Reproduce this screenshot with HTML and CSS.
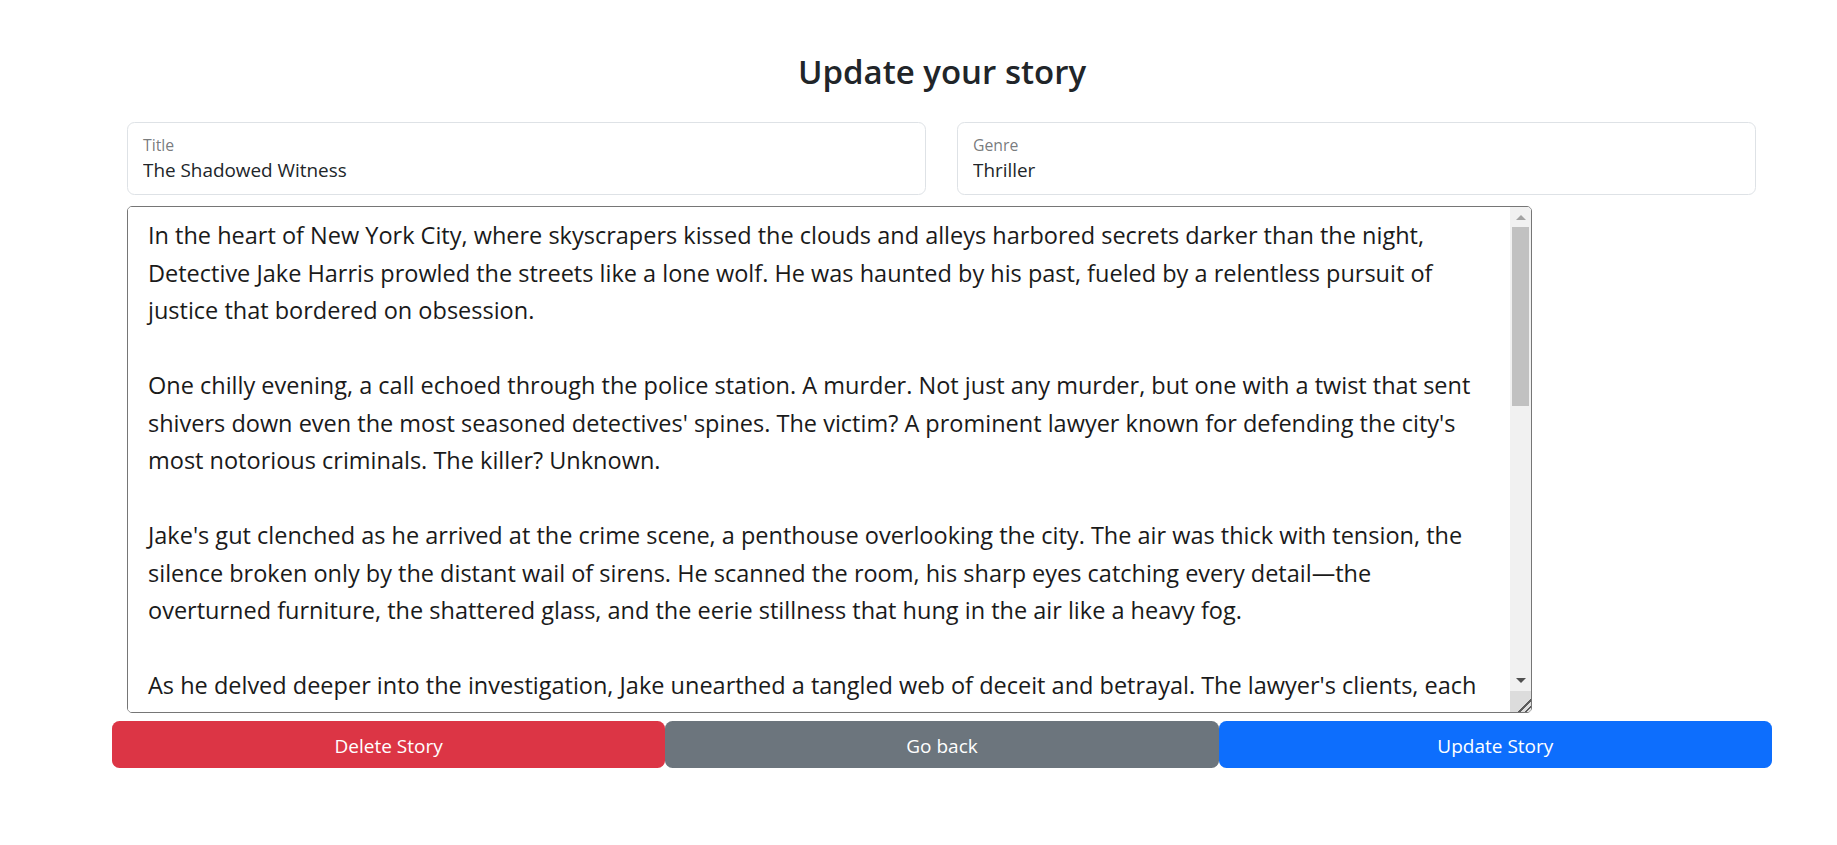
FILE: index.html
```html
<!DOCTYPE html>
<html lang="en">
<head>
<meta charset="utf-8">
<title>Update your story</title>
<link rel="stylesheet" href="styles.css">
</head>
<body>
<main class="page">
  <h3 class="heading">Update your story</h3>
  <div class="fields">
    <div class="field">
      <label class="field-label" for="title">Title</label>
      <input class="field-input" id="title" type="text" value="The Shadowed Witness">
    </div>
    <div class="field">
      <label class="field-label" for="genre">Genre</label>
      <input class="field-input" id="genre" type="text" value="Thriller">
    </div>
  </div>
  <div class="story-box">
    <textarea class="story" wrap="off" aria-label="Story">In the heart of New York City, where skyscrapers kissed the clouds and alleys harbored secrets darker than the night,
Detective Jake Harris prowled the streets like a lone wolf. He was haunted by his past, fueled by a relentless pursuit of
justice that bordered on obsession.

One chilly evening, a call echoed through the police station. A murder. Not just any murder, but one with a twist that sent
shivers down even the most seasoned detectives' spines. The victim? A prominent lawyer known for defending the city's
most notorious criminals. The killer? Unknown.

Jake's gut clenched as he arrived at the crime scene, a penthouse overlooking the city. The air was thick with tension, the
silence broken only by the distant wail of sirens. He scanned the room, his sharp eyes catching every detail—the
overturned furniture, the shattered glass, and the eerie stillness that hung in the air like a heavy fog.

As he delved deeper into the investigation, Jake unearthed a tangled web of deceit and betrayal. The lawyer's clients, each
with their own motives and secrets, became suspects in a game of cat and mouse that stretched across the city.

Days turned into sleepless nights as Jake chased leads through smoky bars, abandoned warehouses, and glittering
penthouses. Every clue seemed to lead him deeper into the shadows, where the line between friend and foe blurred.

Then, a breakthrough. A witness—a young woman who had seen the killer's face—stepped forward. But before she could
reveal what she knew, she vanished without a trace, leaving Jake with a cryptic note and a growing sense of dread.

Determined to find her, Jake followed the trail into the city's underbelly, where the powerful and the corrupt conspired
in the dark. He soon realized that the killer was closer than he had ever imagined, hiding in plain sight.

In a final, heart-pounding confrontation atop a rain-soaked rooftop, Jake came face to face with the truth. The shadowed
witness had been watching all along, and now, with the city sprawling beneath them, justice hung by a thread.</textarea>
    <div class="scrollbar" aria-hidden="true">
      <div class="sb-btn sb-up"></div>
      <div class="sb-track"><div class="sb-thumb"></div></div>
      <div class="sb-btn sb-down"></div>
      <div class="sb-resizer"></div>
    </div>
  </div>
  <div class="actions">
    <button class="btn btn-danger" type="button">Delete Story</button>
    <button class="btn btn-secondary" type="button">Go back</button>
    <button class="btn btn-primary" type="button">Update Story</button>
  </div>
</main>
</body>
</html>
```
FILE: styles.css
```css
* { box-sizing: border-box; }
html, body { margin: 0; padding: 0; background: #fff; }
body {
  font-family: "Open Sans", "Noto Sans", sans-serif;
  color: #212529;
}
.page {
  width: 1660px;
  margin-left: 112px;
  padding-top: 51px;
}
.heading {
  margin: 0;
  font-size: 33px;
  font-weight: 600;
  line-height: 42px;
  text-align: center;
  color: #212529;
}
.fields {
  display: grid;
  grid-template-columns: 1fr 1fr;
  column-gap: 31px;
  margin: 29px 16px 0 15px;
}
.field {
  height: 72.5px;
  border: 1px solid #dee2e6;
  border-radius: 7.5px;
  padding: 12px 15px 0 15px;
  display: flex;
  flex-direction: column;
}
.field-label {
  font-size: 15.8px;
  line-height: 20px;
  color: rgba(33, 37, 41, 0.62);
}
.field-input {
  margin-top: 0;
  border: 0;
  padding: 0;
  outline: none;
  font: inherit;
  font-size: 18.9px;
  line-height: 30px;
  height: 30px;
  color: #212529;
  background: transparent;
}
.story-box {
  display: flex;
  margin: 11.5px 0 0 15px;
  width: 1405px;
  height: 507px;
  border: 1px solid #767676;
  border-radius: 5px;
  overflow: hidden;
}
.story {
  flex: 1;
  min-width: 0;
  height: 100%;
  border: 0;
  padding: 10px 20px;
  font-family: inherit;
  font-size: 23.5px;
  line-height: 37.5px;
  color: #1a1a1a;
  white-space: pre;
  overflow: hidden;
  resize: none;
  outline: none;
  background: #fff;
}
.scrollbar {
  width: 21px;
  flex: none;
  display: flex;
  flex-direction: column;
  background: #f1f1f1;
}
.sb-btn {
  height: 21px;
  flex: none;
  display: flex;
  align-items: center;
  justify-content: center;
}
.sb-up { height: 20px; }
.sb-up::before {
  content: "";
  border-left: 5px solid transparent;
  border-right: 5px solid transparent;
  border-bottom: 5px solid #a3a3a3;
}
.sb-down::before {
  content: "";
  border-left: 5px solid transparent;
  border-right: 5px solid transparent;
  border-top: 5px solid #505050;
}
.sb-track {
  flex: 1;
  padding: 0 2px;
}
.sb-thumb {
  height: 179px;
  background: #c1c1c1;
}
.sb-resizer {
  height: 21px;
  flex: none;
  background-color: #dcdcdc;
  background-image: linear-gradient(135deg, transparent 69%, #5a5a5a 69%, #5a5a5a 74%, transparent 74%, transparent 84%, #5a5a5a 84%, #5a5a5a 89%, transparent 89%);
}
.actions {
  display: grid;
  grid-template-columns: 1fr 1fr 1fr;
  margin-top: 8px;
}
.btn {
  height: 46.5px;
  border: 1px solid transparent;
  border-radius: 7.5px;
  font-family: inherit;
  font-size: 19px;
  line-height: 30px;
  color: #fff;
  padding: 3px 0 0 0;
  cursor: pointer;
}
.btn-danger { background: #dc3545; }
.btn-secondary { background: #6c757d; }
.btn-primary { background: #0d6efd; }
```
